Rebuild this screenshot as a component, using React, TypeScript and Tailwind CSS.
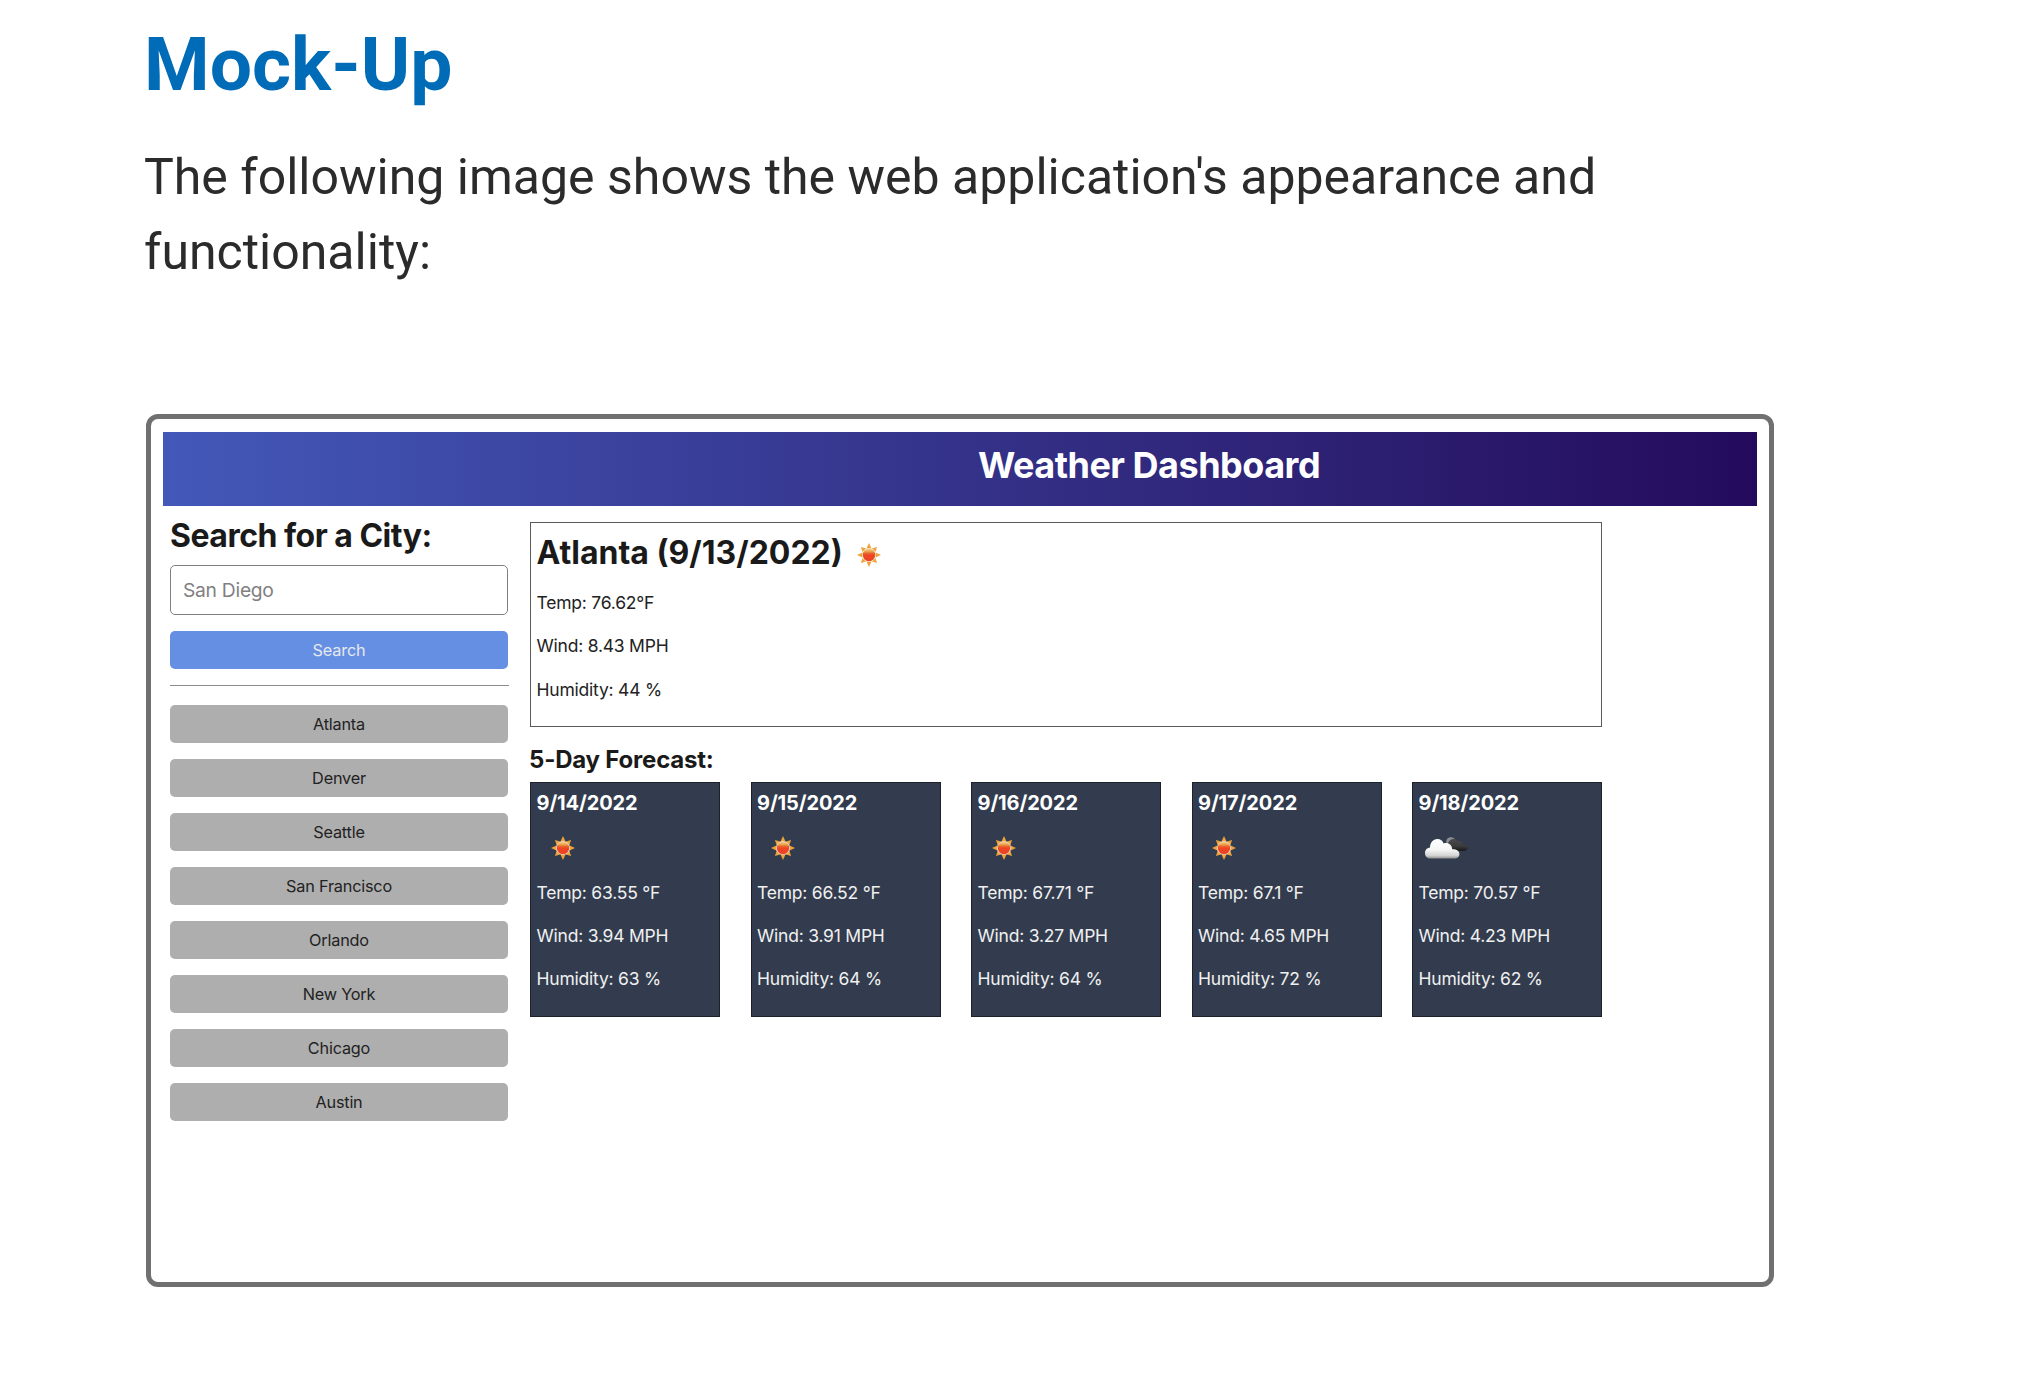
type Reading = { temp: string; wind: string; humidity: string };
type Day = Reading & { date: string; icon: "sun" | "clouds" };

const cities = ["Atlanta", "Denver", "Seattle", "San Francisco", "Orlando", "New York", "Chicago", "Austin"];

const forecast: Day[] = [
  { date: "9/14/2022", icon: "sun", temp: "63.55 °F", wind: "3.94 MPH", humidity: "63 %" },
  { date: "9/15/2022", icon: "sun", temp: "66.52 °F", wind: "3.91 MPH", humidity: "64 %" },
  { date: "9/16/2022", icon: "sun", temp: "67.71 °F", wind: "3.27 MPH", humidity: "64 %" },
  { date: "9/17/2022", icon: "sun", temp: "67.1 °F", wind: "4.65 MPH", humidity: "72 %" },
  { date: "9/18/2022", icon: "clouds", temp: "70.57 °F", wind: "4.23 MPH", humidity: "62 %" },
];

function SunIcon() {
  return (
    <svg viewBox="0 0 24 24" className="h-6 w-6 shrink-0">
      <defs>
        <linearGradient id="sunBody" x1="0" y1="0" x2="0" y2="1">
          <stop offset="0" stopColor="#f6cf8e" />
          <stop offset="0.22" stopColor="#e9a24c" />
          <stop offset="0.4" stopColor="#ea5a2a" />
          <stop offset="0.55" stopColor="#ee4423" />
          <stop offset="1" stopColor="#ea4424" />
        </linearGradient>
      </defs>
      {[0, 45, 90, 135, 180, 225, 270, 315].map((angle) => (
        <path
          key={angle}
          d={angle % 90 === 0 ? "M12 0 L14.5 5.4 L9.5 5.4 Z" : "M12 0.6 L14.5 5.4 L9.5 5.4 Z"}
          fill="#eea23a"
          transform={`rotate(${angle} 12 12)`}
        />
      ))}
      <circle cx="12" cy="12" r="7.1" fill="#fadcbc" />
      <circle cx="12" cy="12" r="6.2" fill="url(#sunBody)" />
    </svg>
  );
}

function CloudsIcon() {
  return (
    <svg viewBox="0 0 44 24" className="ml-0.5 h-6 w-11 shrink-0">
      <defs>
        <linearGradient id="cloudFront" x1="0" y1="0" x2="0" y2="1">
          <stop offset="0" stopColor="#ffffff" />
          <stop offset="0.55" stopColor="#f6f6f6" />
          <stop offset="0.85" stopColor="#d2d2d2" />
          <stop offset="1" stopColor="#8c8c8c" />
        </linearGradient>
        <linearGradient id="cloudBack" x1="0" y1="0" x2="0" y2="1">
          <stop offset="0" stopColor="#4c4c4c" />
          <stop offset="0.6" stopColor="#3a3a3a" />
          <stop offset="1" stopColor="#181818" />
        </linearGradient>
      </defs>
      <circle cx="26.8" cy="5.8" r="4.6" fill="#8b8f94" />
      <path
        d="M24 8 C24.5 3.6 30.5 1.2 33.5 5 C37 4.6 38.6 6.2 39 8.4 C42 8.4 44 10 43.6 12 C43.2 14.4 41 15 39 15 L27 15 Z"
        fill="url(#cloudBack)"
      />
      <path
        d="M6.5 22.6 C3 22.6 1 20 1 17 C1 13.6 3.4 11.6 6 11.4 C6 7 9 3 13.4 3 C16.6 3 18.6 4.8 19.6 7.4 C24 6 28.2 9 28.2 13.2 C32.4 13 35.4 15 35.4 18 C35.4 21 33 22.6 30.4 22.6 Z"
        fill="url(#cloudFront)"
      />
    </svg>
  );
}

function Readings({ temp, wind, humidity }: Reading) {
  return (
    <>
      <p>Temp: {temp}</p>
      <p>Wind: {wind}</p>
      <p>Humidity: {humidity}</p>
    </>
  );
}

function Sidebar() {
  return (
    <aside className="w-[339px] shrink-0 pt-2.5">
      <h2 className="whitespace-nowrap text-[32px] leading-10 font-bold tracking-[-0.5px]">Search for a City:</h2>
      <input
        className="mt-[9px] block h-[50px] w-[338px] rounded-[5px] border border-[#808080] bg-white px-3 text-[19.25px] tracking-[-0.27px] placeholder:text-[#808080]"
        placeholder="San Diego"
      />
      <button className="mt-4 block h-[37.5px] w-[338px] rounded-[5px] bg-[#658fe3] text-[16.25px] tracking-[-0.15px] text-[#e6e8ee]">
        Search
      </button>
      <hr className="mt-[16.5px] border-t border-[#8c8c8c]" />
      <div className="mt-[19px] flex w-[338px] flex-col gap-4">
        {cities.map((city) => (
          <button key={city} className="h-[38px] rounded-[5px] bg-[#aeaeae] text-[16.25px] tracking-[-0.2px] text-[#222222]">
            {city}
          </button>
        ))}
      </div>
    </aside>
  );
}

function ForecastCard({ date, icon, ...reading }: Day) {
  return (
    <article className="h-[235px] w-[190px] border border-[#1d2129] bg-[#323c4e] pl-[5.5px] pt-[5px] text-[17.5px] leading-[43px] tracking-[-0.22px] whitespace-nowrap text-[#f0f0f0]">
      <h4 className="text-xl leading-[30px] font-bold tracking-[-0.1px] text-white">{date}</h4>
      <div className="flex h-[53px] w-[52px] items-center justify-center pt-[7px]">
        {icon === "sun" ? <SunIcon /> : <CloudsIcon />}
      </div>
      <Readings {...reading} />
    </article>
  );
}

function Dashboard() {
  return (
    <div className="ml-0.5 h-[873px] w-[1628px] rounded-xl border-5 border-[#707070] px-3 pt-[13px] font-['Inter',sans-serif] text-[#1a1a1a]">
      <header className="h-[74px] bg-linear-to-r from-[#4358b9] to-[#240a5c] pl-[378px] text-center text-4xl leading-[66px] font-bold tracking-[-0.49px] text-white">
        Weather Dashboard
      </header>
      <div className="flex pl-[7px]">
        <Sidebar />
        <main className="ml-[21px] w-[1072px]">
          <section className="mt-4 h-[205px] border border-[#5a5a5a] pt-1.5 pl-[5.5px]">
            <div className="flex items-center">
              <h2 className="text-[32px] leading-[48px] font-bold">Atlanta (9/13/2022)</h2>
              <div className="ml-3.5 pt-1">
                <SunIcon />
              </div>
            </div>
            <div className="mt-[3.5px] text-[17.5px] leading-[43.8px] tracking-[-0.22px] text-[#222222]">
              <Readings temp="76.62°F" wind="8.43 MPH" humidity="44 %" />
            </div>
          </section>
          <h3 className="mt-[18px] -ml-px text-2xl leading-[30px] font-bold tracking-[-0.2px]">5-Day Forecast:</h3>
          <section className="mt-[7px] flex justify-between">
            {forecast.map((day) => (
              <ForecastCard key={day.date} {...day} />
            ))}
          </section>
        </main>
      </div>
    </div>
  );
}

export default function App() {
  return (
    <div className="min-h-screen bg-white pt-[19px] pl-36 font-['Roboto',sans-serif]">
      <h1 className="text-[75px] leading-[90px] font-bold text-[#006bb6]">Mock-Up</h1>
      <p className="mt-[31px] mb-[124px] w-[1630px] text-[50px] leading-[75px] text-[#2b2b2b]">
        The following image shows the web application's appearance and functionality:
      </p>
      <Dashboard />
    </div>
  );
}
